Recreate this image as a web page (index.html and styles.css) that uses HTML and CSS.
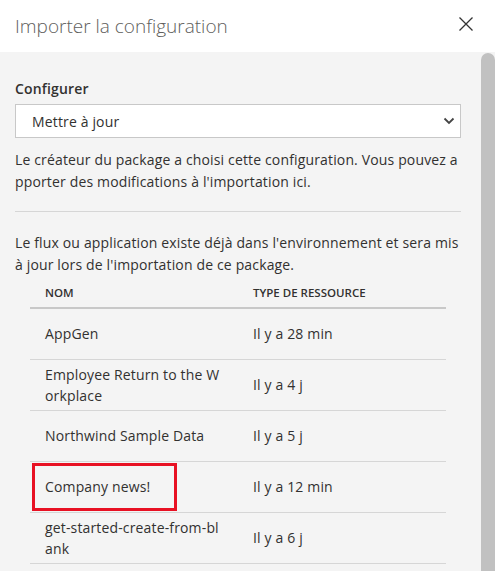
FILE: index.html
```html
<!DOCTYPE html>
<html lang="fr">
<head>
  <meta charset="UTF-8" />
  <title>Importer la configuration</title>
  <meta name="viewport" content="width=device-width, initial-scale=1.0"/>
  <link rel="stylesheet" href="styles.css">
</head>
<body>
  <div class="dialog">
    <header class="dialog-header">
      <h1>Importer la configuration</h1>
      <button class="close" aria-label="Fermer">
        <svg width="16" height="16" viewBox="0 0 16 16"><path d="M1.5 1.5 L14.5 14.5 M14.5 1.5 L1.5 14.5" stroke="#333" stroke-width="1.3" fill="none"/></svg>
      </button>
    </header>

    <div class="dialog-body">
      <div class="content">
        <div class="field-label">Configurer</div>
        <div class="select">
          <span>Mettre à jour</span>
          <svg width="12" height="8" viewBox="0 0 12 8"><path d="M1.5 1.5 L6 6 L10.5 1.5" stroke="#444" stroke-width="1.8" fill="none"/></svg>
        </div>

        <p class="note">Le créateur du package a choisi cette configuration. Vous pouvez apporter des modifications à l'importation ici.</p>

        <hr class="divider">

        <p class="note">Le flux ou application existe déjà dans l'environnement et sera mis à jour lors de l'importation de ce package.</p>

        <table class="resources">
          <thead>
            <tr><th>Nom</th><th>Type de ressource</th></tr>
          </thead>
          <tbody>
            <tr><td>AppGen</td><td>Il y a 28 min</td></tr>
            <tr><td>Employee Return to the Workplace</td><td>Il y a 4 j</td></tr>
            <tr><td>Northwind Sample Data</td><td>Il y a 5 j</td></tr>
            <tr><td class="marked">Company news!<span class="highlight"></span></td><td>Il y a 12 min</td></tr>
            <tr><td>get-started-create-from-blank</td><td>Il y a 6 j</td></tr>
          </tbody>
        </table>
      </div>

      <div class="scrollbar"><div class="thumb"></div></div>
    </div>
  </div>
</body>
</html>
```

FILE: styles.css
```css
body {
  margin: 0;
  background: #f4f4f4;
  color: #323130;
  font-family: 'Open Sans', 'Noto Sans', sans-serif;
  overflow: hidden;
}

.dialog {
  height: 571px;
  display: flex;
  flex-direction: column;
}

.dialog-header {
  height: 52px;
  background: white;
  display: flex;
  align-items: center;
  justify-content: space-between;
  padding: 0 21px 0 15px;
  flex-shrink: 0;
}

.dialog-header h1 {
  margin: 0;
  font-size: 19px;
  font-weight: 300;
  color: #605e5c;
}

.close {
  background: none;
  border: none;
  padding: 0;
  width: 16px;
  height: 16px;
  margin-bottom: 4px;
  cursor: pointer;
}

.dialog-body {
  flex: 1;
  display: flex;
  min-height: 0;
}

.content {
  flex: 1;
  padding: 27px 20px 0 15px;
  font-size: 14px;
  letter-spacing: 0.15px;
}

.field-label {
  font-weight: 600;
  font-size: 14px;
  line-height: 20px;
  margin-bottom: 5px;
}

.select {
  height: 34px;
  box-sizing: border-box;
  background: white;
  border: 1px solid #c8c8c8;
  display: flex;
  align-items: center;
  justify-content: space-between;
  padding: 0 5px 0 16px;
}

.note {
  margin: 11px 0 0 0;
  line-height: 22px;
  word-break: break-all;
}

.divider {
  border: none;
  border-top: 1px solid #d6d6d6;
  margin: 18px 0 20px 0;
}

.divider + .note {
  margin-top: 0;
}

.resources {
  width: 416px;
  margin: 2px 15px 0 15px;
  border-collapse: collapse;
  table-layout: fixed;
}

.resources th {
  text-align: left;
  text-transform: uppercase;
  font-size: 11.5px;
  font-weight: 600;
  letter-spacing: 0;
  line-height: 16px;
  padding: 7px 15px 6px 15px;
  border-bottom: 2px solid #c8c8c8;
}

.resources td {
  height: 51px;
  box-sizing: border-box;
  padding: 0 15px;
  line-height: 21px;
  vertical-align: middle;
  word-break: break-all;
  border-bottom: 1px solid #d6d6d6;
}

.resources td.marked {
  position: relative;
}

.highlight {
  position: absolute;
  left: 2px;
  top: 1px;
  width: 145px;
  height: 48px;
  box-sizing: border-box;
  border: 3px solid #e81123;
}

.scrollbar {
  width: 14px;
  flex-shrink: 0;
  padding-top: 1px;
}

.thumb {
  height: 100%;
  background: #c1c1c1;
  border-radius: 7px 7px 0 0;
}
```
